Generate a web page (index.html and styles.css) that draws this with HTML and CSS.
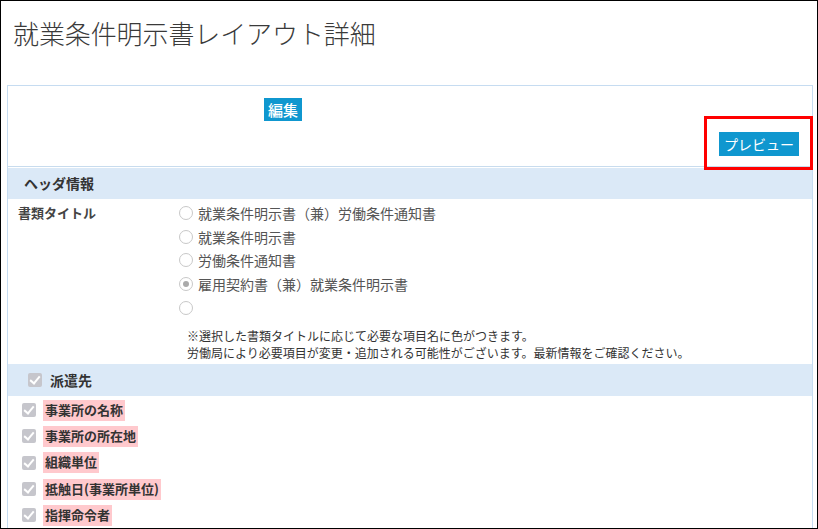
FILE: index.html
```html
<!DOCTYPE html>
<html lang="ja">
<head>
<meta charset="utf-8">
<title>就業条件明示書レイアウト詳細</title>
<link rel="stylesheet" href="styles.css">
</head>
<body>
<div class="frame">
  <h1 class="title">就業条件明示書レイアウト詳細</h1>
  <div class="panel">
    <div class="panel-top">
      <div class="edit-row"><span class="btn">編集</span></div>
      <div class="preview-row"><span class="btn">プレビュー</span></div>
    </div>
    <div class="section-head">ヘッダ情報</div>
    <div class="field">
      <div class="field-label">書類タイトル</div>
      <div class="field-body">
        <div class="radio-row"><span class="radio"></span><span>就業条件明示書（兼）労働条件通知書</span></div>
        <div class="radio-row"><span class="radio"></span><span>就業条件明示書</span></div>
        <div class="radio-row"><span class="radio"></span><span>労働条件通知書</span></div>
        <div class="radio-row"><span class="radio checked"></span><span>雇用契約書（兼）就業条件明示書</span></div>
        <div class="radio-row"><span class="radio"></span></div>
        <div class="note">
          <p>※選択した書類タイトルに応じて必要な項目名に色がつきます。</p>
          <p>労働局により必要項目が変更・追加される可能性がございます。最新情報をご確認ください。</p>
        </div>
      </div>
    </div>
    <div class="section-head check-head"><span class="cb"></span>派遣先</div>
    <ul class="items">
      <li><span class="cb"></span><span class="tag">事業所の名称</span></li>
      <li><span class="cb"></span><span class="tag">事業所の所在地</span></li>
      <li><span class="cb"></span><span class="tag">組織単位</span></li>
      <li><span class="cb"></span><span class="tag">抵触日(事業所単位)</span></li>
      <li><span class="cb"></span><span class="tag">指揮命令者</span></li>
    </ul>
  </div>
  <div class="highlight"></div>
</div>
</body>
</html>
```
FILE: styles.css
```css
* { box-sizing: border-box; }
html, body { margin: 0; padding: 0; background: #fff; }
body {
  font-family: "Noto Sans CJK JP", "Noto Sans", sans-serif;
  color: #333;
}
.frame {
  position: relative;
  width: 818px;
  height: 529px;
  border: 1px solid #000;
  overflow: hidden;
}
.title {
  margin: 0;
  padding: 14px 0 0 12px;
  height: 84px;
  font-size: 26px;
  font-weight: 300;
  line-height: 36px;
  color: #3a3a3a;
  letter-spacing: -0.1px;
}
.panel {
  margin: 0 4px 0 6px;
  border: 1px solid #c6dcf1;
  border-bottom: none;
}
.panel-top {
  height: 81px;
  border-bottom: 1px solid #c8dcee;
  padding-top: 11px;
}
.edit-row { padding-left: 256px; height: 35px; }
.preview-row { display: flex; justify-content: flex-end; padding-right: 13px; }
.btn {
  display: inline-block;
  background: #0f97cf;
  color: #fff;
  font-size: 14px;
  line-height: 23px;
  height: 23px;
  padding: 0 3px;
}
.edit-row .btn { font-size: 15px; padding: 0 4px; font-weight: 500; }
.preview-row .btn { width: 80px; text-align: center; line-height: 24px; height: 24px; }
.section-head {
  margin-top: 1px;
  background: #dbe9f7;
  height: 31px;
  padding-left: 16px;
  font-size: 14px;
  font-weight: 700;
  line-height: 31px;
  color: #333;
}
.field {
  display: grid;
  grid-template-columns: 171px 1fr;
  padding-top: 2px;
  height: 165px;
}
.field-label {
  padding-left: 10px;
  font-size: 13px;
  font-weight: 700;
  line-height: 24px;
  color: #444;
}
.radio-row {
  display: flex;
  align-items: center;
  gap: 5px;
  height: 23.8px;
  font-size: 14px;
  color: #555;
}
.radio {
  width: 14px;
  height: 14px;
  border-radius: 50%;
  border: 1px solid #c8c8c8;
  background: #fff;
  flex: none;
  position: relative;
}
.radio.checked::after {
  content: "";
  position: absolute;
  left: 3px;
  top: 3px;
  width: 6px;
  height: 6px;
  border-radius: 50%;
  background: #aaa;
}
.note {
  padding: 7px 0 0 8px;
  font-size: 12px;
  line-height: 17px;
  color: #333;
}
.note p { margin: 0; }
.check-head {
  height: 32px;
  line-height: 32px;
  padding-left: 20px;
  display: flex;
  align-items: center;
  gap: 8px;
  margin-top: 0;
}
.cb {
  width: 14px;
  height: 14px;
  border-radius: 2px;
  background: #c6c6cc;
  flex: none;
  position: relative;
}
.cb::after {
  content: "";
  position: absolute;
  left: 4px;
  top: 1px;
  width: 4px;
  height: 8px;
  border: solid #fff;
  border-width: 0 2px 2px 0;
  transform: rotate(40deg);
}
.items {
  list-style: none;
  margin: 0;
  padding: 1px 0 0 14px;
}
.items li {
  display: flex;
  align-items: center;
  gap: 7px;
  height: 26.3px;
}
.tag {
  background: #ffc9cd;
  font-size: 13px;
  font-weight: 700;
  line-height: 20px;
  height: 21px;
  padding: 0 2px 0 2px;
  color: #333;
}
.highlight {
  position: absolute;
  left: 703px;
  top: 115px;
  width: 109px;
  height: 54px;
  border: 3px solid #f00;
}
```
